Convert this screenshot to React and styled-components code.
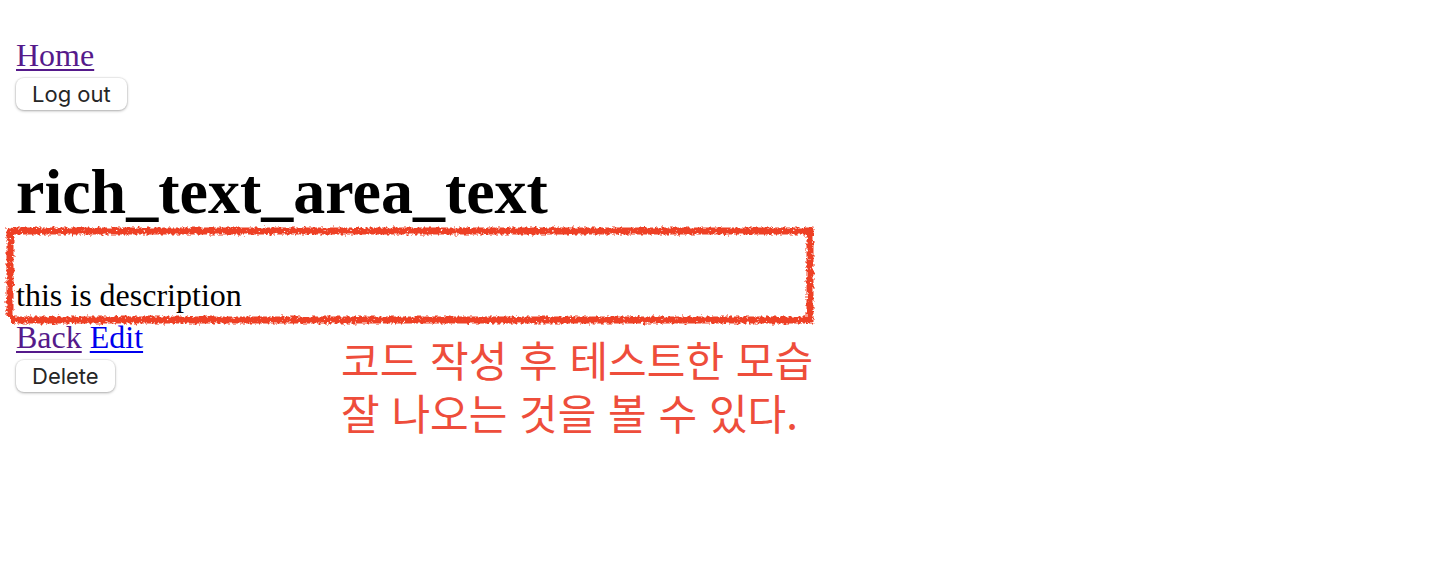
import React from "react";
import styled, { createGlobalStyle } from "styled-components";

const GlobalStyle = createGlobalStyle`
  body {
    margin: 0;
    background: #fff;
    color: #000;
    font-family: "Liberation Serif", "Times New Roman", serif;
    font-size: 32px;
    line-height: 36px;
  }
`;

const Page = styled.div`
  min-height: 100vh;
  box-sizing: border-box;
  padding: 37px 16px 16px;
`;

const Links = styled.nav`
  display: flex;
  gap: 8px;
  margin-bottom: 5px;
`;

const TextLink = styled.a`
  color: ${({ $visited }) => ($visited ? "#551a8b" : "#0000ee")};
  text-decoration: underline;
  text-decoration-thickness: 2px;
  text-underline-offset: 3px;
`;

const Button = styled.button`
  display: block;
  height: 32px;
  padding: 0 16px;
  border: 0;
  border-radius: 8px;
  background: #fff;
  color: #262626;
  font-family: Inter, sans-serif;
  font-size: 22px;
  line-height: 32px;
  box-shadow: 0 0 1px 1px rgba(0, 0, 0, 0.06), 0 1px 3px rgba(0, 0, 0, 0.3);
`;

const Title = styled.h1`
  margin: 45px 0 0;
  font-size: 64px;
  font-weight: 700;
  line-height: 74px;
`;

const Description = styled.section`
  position: relative;
  padding: 48px 0 6px;
`;

const Frame = styled.svg`
  position: absolute;
  top: -8px;
  left: -15px;
  width: 815px;
  height: 105px;
  pointer-events: none;
`;

const Footer = styled.footer`
  display: grid;
  grid-template-columns: 325px auto;
  justify-content: start;
  align-items: start;
`;

const Note = styled.p`
  margin: 13px 0 0;
  color: #ee4d3b;
  font-family: "Noto Sans CJK KR", sans-serif;
  font-size: 42px;
  line-height: 53px;
  white-space: nowrap;
`;

function CrayonFrame() {
  return (
    <Frame viewBox="0 0 815 105" aria-hidden="true">
      <defs>
        <filter
          id="crayon"
          filterUnits="userSpaceOnUse"
          x="0"
          y="0"
          width="815"
          height="105"
          colorInterpolationFilters="sRGB"
        >
          <feTurbulence type="fractalNoise" baseFrequency="0.35" numOctaves="2" seed="8" result="noise" />
          <feDisplacementMap
            in="SourceGraphic"
            in2="noise"
            scale="6"
            xChannelSelector="R"
            yChannelSelector="G"
            result="rough"
          />
          <feColorMatrix
            in="noise"
            type="matrix"
            values="0 0 0 0 0  0 0 0 0 0  0 0 0 0 0  0 0 -9 0 7.4"
            result="grain"
          />
          <feComposite in="rough" in2="grain" operator="in" />
        </filter>
      </defs>
      <path
        d="M6 10H809V99H10M9 7V96"
        fill="none"
        stroke="#ee4025"
        strokeWidth="7"
        filter="url(#crayon)"
      />
    </Frame>
  );
}

export default function App() {
  return (
    <>
      <GlobalStyle />
      <Page>
        <Links>
          <TextLink href="#home" $visited>Home</TextLink>
        </Links>
        <Button type="button">Log out</Button>
        <Title>rich_text_area_text</Title>
        <Description>
          this is description
          <CrayonFrame />
        </Description>
        <Footer>
          <div>
            <Links>
              <TextLink href="#back" $visited>Back</TextLink>
              <TextLink href="#edit">Edit</TextLink>
            </Links>
            <Button type="button">Delete</Button>
          </div>
          <Note lang="ko">
            코드 작성 후 테스트한 모습
            <br />
            잘 나오는 것을 볼 수 있다.
          </Note>
        </Footer>
      </Page>
    </>
  );
}
